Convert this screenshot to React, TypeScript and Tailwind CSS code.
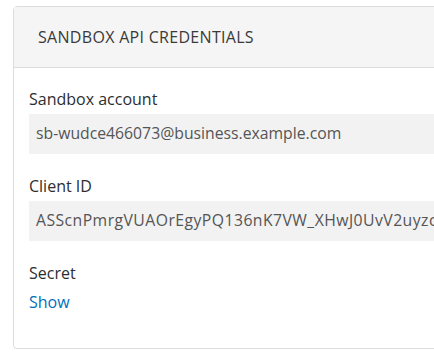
import React from 'react';

const Field = ({ label, value, wide }: { label: string; value: string; wide?: boolean }) => (
  <div className="mb-[22px]">
    <div className="text-[16px] leading-[20px] text-[#2c2e2f] mb-[5px]">{label}</div>
    <div
      className={
        wide
          ? 'h-[40px] bg-[#f2f2f2] pl-[7px] flex items-center whitespace-nowrap overflow-hidden text-[15.75px] text-[#555] tracking-[0.45px]'
          : 'h-[40px] bg-[#f2f2f2] pl-[7px] flex items-center whitespace-nowrap overflow-hidden text-[15.75px] text-[#555]'
      }
    >
      {value}
    </div>
  </div>
);

export default function App() {
  return (
    <div className="w-[434px] h-[359px] bg-white overflow-hidden font-['Open_Sans',sans-serif]">
      <div className="ml-[13px] mt-[6px] w-[500px] border border-[#dcdcdc] rounded-[4px] bg-white">
        <div className="h-[61px] bg-[#f5f5f5] border-b border-[#dcdcdc] flex items-center pl-[24px] text-[16px] text-[#3a3a3a] tracking-[0.3px]">
          SANDBOX API CREDENTIALS
        </div>
        <div className="pl-[15px] pt-[21px] pb-[36px]">
          <Field label="Sandbox account" value="sb-wudce466073@business.example.com" />
          <Field label="Client ID" value="ASScnPmrgVUAOrEgyPQ136nK7VW_XHwJ0UvV2uyzc" wide />
          <div className="text-[16px] leading-[20px] text-[#2c2e2f]">Secret</div>
          <div className="mt-[9px] text-[16px] leading-[20px] text-[#0070ba]">Show</div>
        </div>
      </div>
    </div>
  );
}
